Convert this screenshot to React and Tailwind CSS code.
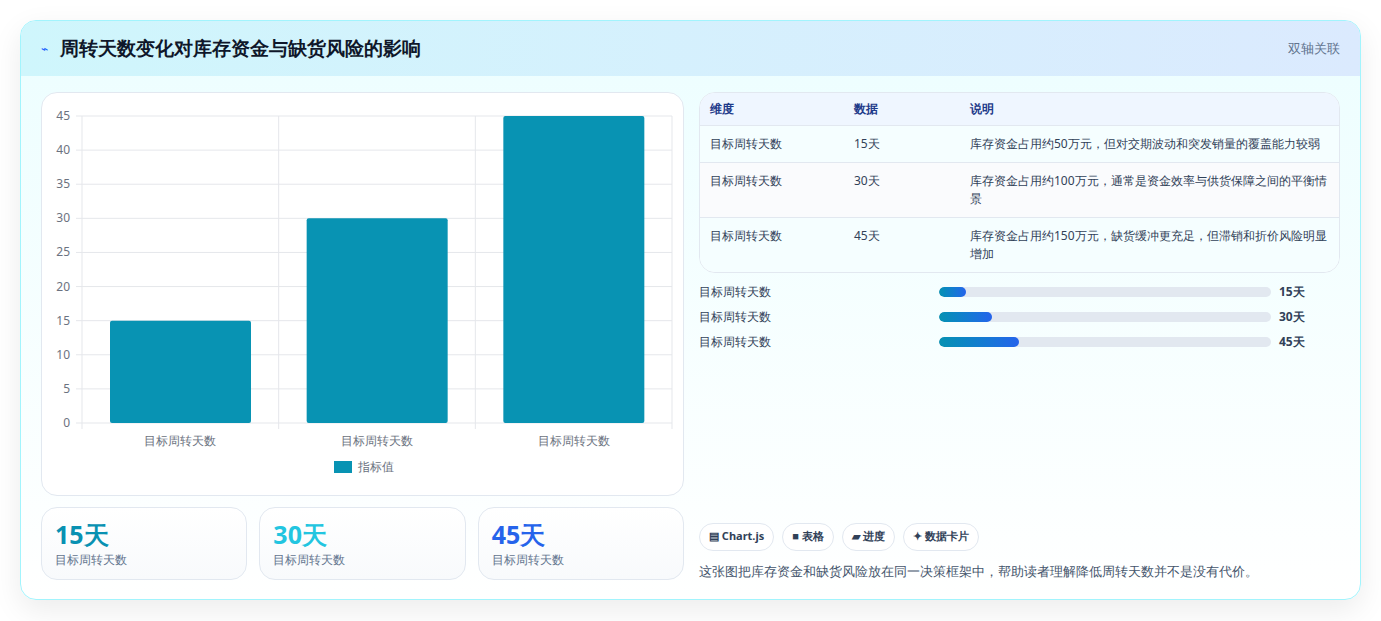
import React from 'react';

const rows = [
  { v: '15天', d: '库存资金占用约50万元，但对交期波动和突发销量的覆盖能力较弱' },
  { v: '30天', d: '库存资金占用约100万元，通常是资金效率与供货保障之间的平衡情景' },
  { v: '45天', d: '库存资金占用约150万元，缺货缓冲更充足，但滞销和折价风险明显增加' },
];

const Chart = () => {
  const x0 = 40, x1 = 630, y0 = 23, y1 = 330;
  const ticks = [0, 5, 10, 15, 20, 25, 30, 35, 40, 45];
  const y = (v) => y1 - (v / 45) * (y1 - y0);
  const cw = (x1 - x0) / 3;
  return (
    <svg width="643" height="402" className="block">
      {ticks.map((t) => (
        <g key={t}>
          <line x1={x0 - 6} x2={x1} y1={y(t)} y2={y(t)} stroke="#e5e7eb" />
          <text x={x0 - 12} y={y(t) + 4} textAnchor="end" fontSize="12" fill="#6b7280">{t}</text>
        </g>
      ))}
      {[0, 1, 2, 3].map((i) => (
        <line key={i} x1={x0 + cw * i} x2={x0 + cw * i} y1={y0} y2={y1 + 6} stroke="#e5e7eb" />
      ))}
      {[15, 30, 45].map((v, i) => (
        <g key={v}>
          <rect x={x0 + cw * i + 28} y={y(v)} width={141} height={y1 - y(v)} fill="#0893b3" rx="2" />
          <text x={x0 + cw * i + cw / 2} y={y1 + 22} textAnchor="middle" fontSize="12" fill="#6b7280">目标周转天数</text>
        </g>
      ))}
      <rect x="292" y="368" width="18" height="12" fill="#0893b3" />
      <text x="316" y="378" fontSize="12" fill="#6b7280">指标值</text>
    </svg>
  );
};

export default function App() {
  return (
    <div className="w-[1381px] h-[621px] bg-white p-5 font-['Noto_Sans_CJK_SC',sans-serif]">
      <div className="h-[580px] rounded-2xl border border-cyan-200 bg-gradient-to-b from-[#ecfeff] to-white shadow-[0_10px_30px_rgba(0,0,0,0.08)] overflow-hidden flex flex-col">
        <div className="h-[55px] shrink-0 flex items-center justify-between px-5 bg-gradient-to-r from-[#cff6fc] to-[#dbeafe]">
          <div className="flex items-center gap-3">
            <span className="text-blue-600 text-xs">⌁</span>
            <span className="text-[19px] font-bold text-[#0f172a]">周转天数变化对库存资金与缺货风险的影响</span>
          </div>
          <span className="text-[13px] text-slate-500">双轴关联</span>
        </div>
        <div className="flex gap-[15px] px-5 pt-4 pb-[18px] flex-1">
          <div className="w-[643px] flex flex-col gap-[11px]">
            <div className="h-[404px] rounded-2xl border border-slate-200 bg-white">
              <Chart />
            </div>
            <div className="grid grid-cols-3 gap-3">
              {[['15天', 'text-[#0891b2]'], ['30天', 'text-[#22c5e0]'], ['45天', 'text-[#2563eb]']].map(([v, c]) => (
                <div key={v} className="h-[73px] rounded-2xl border border-slate-200 bg-gradient-to-b from-white to-[#f8fafc] px-[13px] pt-2">
                  <div className={`text-[25px] font-bold leading-9 ${c}`}>{v}</div>
                  <div className="text-xs text-slate-500">目标周转天数</div>
                </div>
              ))}
            </div>
          </div>
          <div className="flex-1 flex flex-col">
            <div className="rounded-2xl border border-slate-200 overflow-hidden bg-white text-xs">
              <div className="flex bg-[#eff6ff] h-[33px] items-center border-b border-slate-200 text-[#1e3a8a] font-bold">
                <div className="w-[154px] pl-[10px]">维度</div>
                <div className="w-[116px]">数据</div>
                <div className="flex-1">说明</div>
              </div>
              {rows.map((r, i) => (
                <div key={r.v} className={`flex py-[9px] text-slate-700 leading-[18px] ${i ? 'border-t border-slate-200' : ''} ${i === 1 ? 'bg-[#fafbfd]' : 'bg-[#f5feff]'}`}>
                  <div className="w-[154px] pl-[10px]">目标周转天数</div>
                  <div className="w-[116px]">{r.v}</div>
                  <div className="flex-1 pr-2">{r.d}</div>
                </div>
              ))}
            </div>
            <div className="mt-[10px] flex flex-col gap-[7px] text-xs text-slate-700">
              {[8, 16, 24].map((w, i) => (
                <div key={w} className="flex items-center h-[18px]">
                  <div className="w-[240px]">目标周转天数</div>
                  <div className="w-[332px] h-[10px] rounded-full bg-slate-200 overflow-hidden">
                    <div className="h-full rounded-full bg-gradient-to-r from-[#0891b2] to-[#2563eb]" style={{ width: `${w}%` }} />
                  </div>
                  <div className="ml-2 font-bold">{['15天', '30天', '45天'][i]}</div>
                </div>
              ))}
            </div>
            <div className="mt-auto flex gap-2 text-[11px] font-bold text-slate-700">
              {['▤ Chart.js', '■ 表格', '▰ 进度', '✦ 数据卡片'].map((c) => (
                <span key={c} className="h-[28px] px-[9px] flex items-center rounded-full border border-slate-200 bg-white">{c}</span>
              ))}
            </div>
            <div className="mt-[11px] text-[13px] text-slate-600">这张图把库存资金和缺货风险放在同一决策框架中，帮助读者理解降低周转天数并不是没有代价。</div>
          </div>
        </div>
      </div>
    </div>
  );
}
